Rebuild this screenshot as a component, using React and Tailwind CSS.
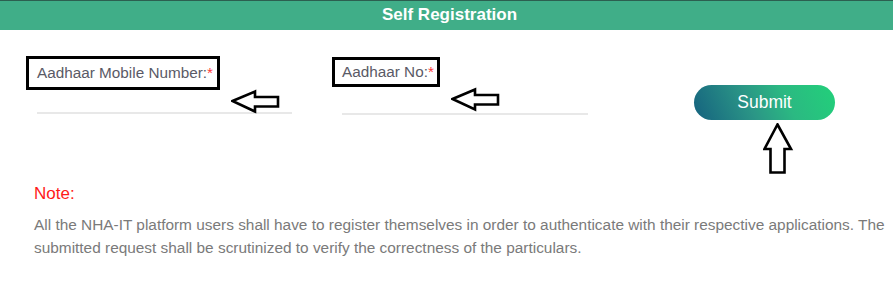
import React from "react";

function LeftArrow({ className }) {
  return (
    <svg className={className} width="50" height="26" viewBox="0 0 50 26" fill="none">
      <polygon
        points="1.5,12 24,2.5 24,8 47,8 47,17.5 24,17.5 24,22.5"
        fill="white"
        stroke="black"
        strokeWidth="2.6"
        strokeLinejoin="miter"
      />
    </svg>
  );
}

function UpArrow({ className }) {
  return (
    <svg className={className} width="32" height="52" viewBox="0 0 32 52" fill="none">
      <polygon
        points="14.5,1.5 28,26 21.5,26 21.5,49.5 7.5,49.5 7.5,26 1.5,26"
        fill="white"
        stroke="black"
        strokeWidth="2.6"
        strokeLinejoin="miter"
      />
    </svg>
  );
}

export default function App() {
  return (
    <div className="relative h-[286px] w-[893px] overflow-hidden bg-white font-['Liberation_Sans',Arial,sans-serif]">
      <div className="flex h-[30px] items-center justify-center border-t border-[#2c5f50] bg-[#40ae88] pb-[2px] pl-[6px]">
        <span className="text-[17px] font-bold text-white">Self Registration</span>
      </div>

      <div className="relative flex items-start pt-[26px]">
        <div className="relative ml-[26px] w-[266px]">
          <div className="inline-flex h-[34px] items-center border-[3px] border-black pl-[8px] pr-[4px] text-[15.3px] text-[#5a5a66]">
            Aadhaar Mobile Number:<span className="text-[#ff3b3b]">*</span>
          </div>
          <div className="ml-[11px] mt-[22px] h-[2px] w-[255px] bg-[#e8e8e8]" />
          <LeftArrow className="absolute left-[205px] top-[33px]" />
        </div>

        <div className="relative ml-[40px] mt-[1px] w-[256px]">
          <div className="inline-flex h-[30px] items-center border-[3px] border-black pl-[7px] pr-[3px] text-[15.3px] text-[#5a5a66]">
            Aadhaar No:<span className="text-[#ff3b3b]">*</span>
          </div>
          <div className="ml-[10px] mt-[26px] h-[2px] w-[246px] bg-[#e8e8e8]" />
          <LeftArrow className="absolute left-[119px] top-[30px]" />
        </div>

        <div className="relative ml-[106px] mt-[29px]">
          <button className="flex h-[35px] w-[141px] items-center justify-center rounded-full bg-[linear-gradient(65deg,#15627f_0%,#2b9686_40%,#2bb982_65%,#22d07a_100%)] text-[17.5px] text-white">
            Submit
          </button>
          <UpArrow className="absolute left-[69px] top-[38px]" />
        </div>
      </div>

      <div className="mt-[62px] pl-[34px]">
        <div className="text-[17px] leading-[24px] text-[#ff1a1a]">Note:</div>
        <p className="mt-[7px] w-[859px] text-[15.4px] leading-[23px] text-[#7a7a7a]">
          All the NHA-IT platform users shall have to register themselves in order to authenticate with their respective applications. The submitted request shall be scrutinized to verify the correctness of the particulars.
        </p>
      </div>
    </div>
  );
}
